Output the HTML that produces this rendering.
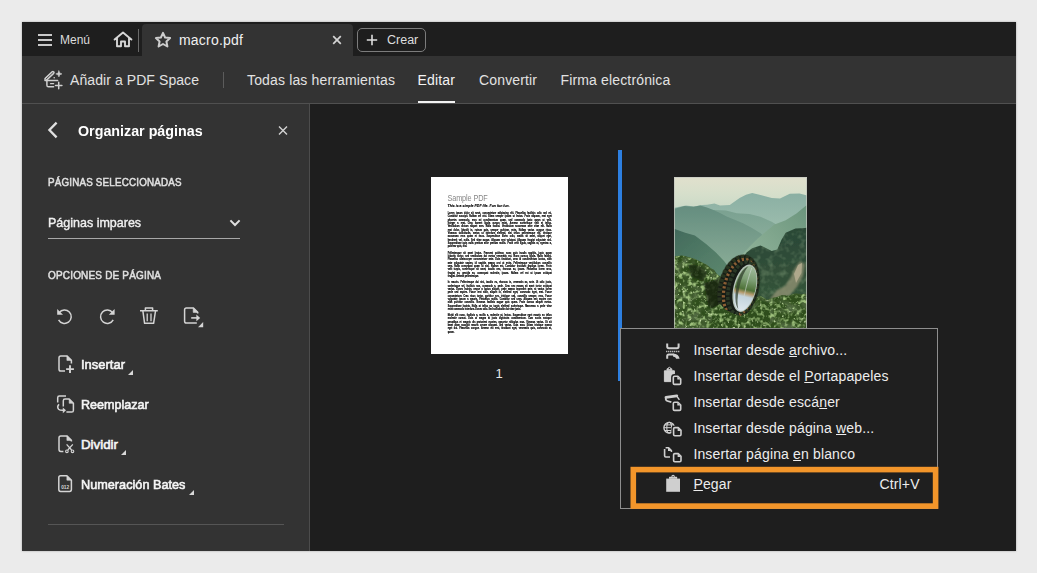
<!DOCTYPE html>
<html lang="es">
<head>
<meta charset="utf-8">
<title>Organizar páginas</title>
<style>
*{box-sizing:border-box;margin:0;padding:0}
html,body{width:1037px;height:573px;overflow:hidden;background:#ebebeb}
body{font-family:"Liberation Sans",sans-serif;color:#e4e4e4;position:relative}
#app{position:absolute;left:22px;top:22px;width:994px;height:529px;background:#1e1e1e;box-shadow:0 0 2px rgba(0,0,0,.3)}
#stage{position:absolute;left:0;top:0;width:1037px;height:573px;overflow:hidden}
.b{position:absolute}
.t{position:absolute;white-space:nowrap;line-height:1;transform-origin:0 50%}
svg{position:absolute;overflow:visible}
/* regions */
#tabbar{left:22px;top:22px;width:994px;height:34px;background:#1e1e1e}
#tab{left:142px;top:24px;width:211px;height:32px;background:#333;border-radius:4px 4px 0 0}
#toolbar{left:22px;top:56px;width:994px;height:47px;background:#333}
#tbline{left:22px;top:103px;width:994px;height:1px;background:#505050}
#panel{left:22px;top:104px;width:287px;height:447px;background:#333}
#pline{left:309px;top:104px;width:1px;height:447px;background:#4c4c4c}
#main{left:310px;top:104px;width:706px;height:447px;background:#1e1e1e}
.tb{font-size:14px;color:#e2e2e2;letter-spacing:.15px}
.hd{transform:scaleX(.935);font-size:10.5px;color:#e0e0e0;-webkit-text-stroke:.5px #e0e0e0;letter-spacing:.2px}
.it{transform:scaleX(1);font-size:13.3px;color:#f6f6f6;-webkit-text-stroke:.6px #f6f6f6}
.mi{font-size:14px;color:#ededed;letter-spacing:.15px}
u{text-decoration:underline;text-underline-offset:1px}

#pg1in{position:absolute;left:0;top:0;width:548px;height:706px;transform:scale(.25);transform-origin:0 0;color:#000}
#pg_t{position:absolute;left:66px;top:68px;font-size:34px;line-height:1;color:#868686;white-space:nowrap;transform:scaleX(.855);transform-origin:0 0;letter-spacing:-.5px}
#pg_s{position:absolute;left:66px;top:106.5px;font-size:14px;line-height:1;font-weight:bold;font-style:italic;white-space:nowrap;color:#000;-webkit-text-stroke:.5px #000}
#pg_b{position:absolute;left:66.5px;top:138px;width:489px;font-size:10.4px;font-weight:bold;line-height:13.33px;color:#000;-webkit-text-stroke:.6px #000;transform:scaleX(.85);transform-origin:0 0}
#pg_b p{margin:0 0 11.6px 0}
#pg_b span{display:block;white-space:nowrap;text-align:justify;text-align-last:justify}
#pg_b span.l{text-align-last:left}
</style>
</head>
<body>
<div id="app"></div>
<div id="stage">
  <!-- tab bar -->
  <div class="b" id="tabbar"></div>
  <div class="b" id="tab"></div>

  <!-- hamburger -->
  <div class="b" style="left:38px;top:34px;width:14px;height:2px;background:#c9c9c9"></div>
  <div class="b" style="left:38px;top:39px;width:14px;height:2px;background:#c9c9c9"></div>
  <div class="b" style="left:38px;top:44px;width:14px;height:2px;background:#c9c9c9"></div>
  <div class="t" style="left:60px;top:34px;font-size:12px;color:#dcdcdc">Menú</div>
  <!-- home -->
  <svg style="left:113px;top:31px" width="20" height="17" viewBox="0 0 20 17"><path d="M1.6 8.6 L10 1.5 L18.4 8.6 M4 7 V15.2 H8 V10.5 H12 V15.2 H16 V7" fill="none" stroke="#d6d6d6" stroke-width="1.9" stroke-linejoin="round" stroke-linecap="round"/></svg>
  <div class="b" style="left:138px;top:29px;width:1px;height:23px;background:#6a6a6a"></div>
  <!-- star -->
  <svg style="left:154px;top:31px" width="18" height="18" viewBox="0 0 18 18"><path d="M9 1.9 L11.1 6.5 L16.1 7.1 L12.4 10.5 L13.4 15.5 L9 13 L4.6 15.5 L5.6 10.5 L1.9 7.1 L6.9 6.5 Z" fill="none" stroke="#cdcdcd" stroke-width="2" stroke-linejoin="round"/></svg>
  <div class="t" style="left:179px;top:33.2px;font-size:14px;letter-spacing:.2px;color:#f0f0f0">macro.pdf</div>
  <!-- tab close -->
  <svg style="left:332px;top:35px" width="10" height="10" viewBox="0 0 10 10"><path d="M1.2 1.2 L8.8 8.8 M8.8 1.2 L1.2 8.8" stroke="#d4d4d4" stroke-width="1.7" fill="none"/></svg>
  <!-- crear -->
  <div class="b" style="left:357px;top:28px;width:69px;height:24px;border:1px solid #7c7c7c;border-radius:5px"></div>
  <svg style="left:366px;top:34px" width="12" height="12" viewBox="0 0 12 12"><path d="M6 0.8 V11.2 M0.8 6 H11.2" stroke="#dedede" stroke-width="1.6" fill="none"/></svg>
  <div class="t" style="left:387px;top:33.5px;font-size:12.5px;color:#dedede">Crear</div>

  <!-- tool bar -->
  <div class="b" id="toolbar"></div>
  <div class="b" id="tbline"></div>

  <!-- pdf space icon -->
  <svg style="left:43px;top:70px" width="20" height="20" viewBox="0 0 20 20" fill="none" stroke="#d0d0d0" stroke-width="1.5" stroke-linecap="round" stroke-linejoin="round">
    <path d="M3 9.1 L9.9 2.6" stroke-width="3.6"/>
    <path d="M3 9.1 L9.9 2.6" stroke="#333" stroke-width="0.9"/>
    <path d="M2 10.5 H14.6"/>
    <path d="M3.9 10.6 V15.2 Q3.9 16.8 5.5 16.8 H10.6"/>
    <path d="M7.6 13.7 H10.6" stroke-width="1.3"/>
    <circle cx="11.2" cy="7.7" r="0.8" fill="#d0d0d0" stroke="none"/>
    <path d="M15.9 0.8 L16.8 3 L19 3.9 L16.8 4.8 L15.9 7 L15 4.8 L12.8 3.9 L15 3 Z" fill="#d0d0d0" stroke-width="0.5"/>
    <path d="M15.7 12.3 V18.7 M12.5 15.5 H18.9" stroke-width="1.5"/>
  </svg>
  <div class="t tb" style="left:70px;top:73px;letter-spacing:.08px">Añadir a PDF Space</div>
  <div class="b" style="left:223px;top:72px;width:1px;height:16px;background:#5c5c5c"></div>
  <div class="t tb" style="left:247px;top:73px">Todas las herramientas</div>
  <div class="t tb" style="left:417.5px;top:73px;color:#f4f4f4">Editar</div>
  <div class="b" style="left:418px;top:101px;width:37px;height:2px;background:#f2f2f2"></div>
  <div class="t tb" style="left:479px;top:73px">Convertir</div>
  <div class="t tb" style="left:560.5px;top:73px">Firma electrónica</div>

  <!-- panel -->
  <div class="b" id="panel"></div>
  <div class="b" id="pline"></div>

  <!-- back chevron -->
  <svg style="left:47px;top:121px" width="12" height="18" viewBox="0 0 12 18"><path d="M9.6 1.6 L2.4 9 L9.6 16.4" fill="none" stroke="#e0e0e0" stroke-width="2.3" stroke-linejoin="miter"/></svg>
  <div class="t" id="p_title" style="transform:scaleX(.985);left:78px;top:123.7px;font-size:14.5px;font-weight:bold;color:#fff">Organizar páginas</div>
  <svg style="left:278px;top:126px" width="10" height="9" viewBox="0 0 10 9"><path d="M1 0.6 L9 8.4 M9 0.6 L1 8.4" stroke="#d4d4d4" stroke-width="1.4" fill="none"/></svg>
  <div class="t hd" id="p_h1" style="left:48px;top:177px">PÁGINAS SELECCIONADAS</div>
  <div class="t" id="p_sel" style="transform:scaleX(.94);left:48px;top:215.5px;font-size:13.3px;color:#f0f0f0;-webkit-text-stroke:.4px #f0f0f0">Páginas impares</div>
  <svg style="left:229px;top:219px" width="12" height="8" viewBox="0 0 12 8"><path d="M1.4 1.4 L6 6 L10.6 1.4" fill="none" stroke="#e0e0e0" stroke-width="2"/></svg>
  <div class="b" style="left:48px;top:238px;width:192px;height:1px;background:#a8a8a8"></div>
  <div class="t hd" id="p_h2" style="transform:scaleX(.95);left:48px;top:270px">OPCIONES DE PÁGINA</div>

  <!-- panel icons (page coords) -->
  <svg style="left:0;top:0" width="1037" height="573" viewBox="0 0 1037 573" fill="none" stroke="#d4d4d4" stroke-width="1.5" stroke-linecap="butt" stroke-linejoin="round">
    <!-- undo -->
    <path d="M59.2 312.6 A6.7 6.7 0 1 1 58.6 319.8"/>
    <path d="M57.2 309 V314.8 H63 Z" fill="#d4d4d4" stroke="none"/>
    <!-- redo -->
    <path d="M112.6 312.6 A6.7 6.7 0 1 0 113.2 319.8"/>
    <path d="M114.6 309 V314.8 H108.8 Z" fill="#d4d4d4" stroke="none"/>
    <!-- trash -->
    <path d="M140 310.8 H157.8 M145.4 310.6 V308 H152.6 V310.6"/>
    <path d="M142.9 311 L144.6 323.3 H153.6 L155.5 311"/>
    <path d="M147.2 313.6 V321.2 M151 313.6 V321.2" stroke-width="1.3"/>
    <!-- export -->
    <path d="M197.7 313.6 V312.4 L193.2 307.9 H186.4 Q184.6 307.9 184.6 309.7 V321.2 Q184.6 323 186.4 323 H196.8"/>
    <path d="M193.2 307.9 V312.4 H197.7 Z" fill="#d4d4d4" stroke-width="0.6"/>
    <path d="M191.2 317.9 H197" stroke-width="1.6"/>
    <path d="M196.4 314.6 L200.2 317.9 L196.4 321.2 Z" fill="#d4d4d4" stroke="none"/>
    <path d="M203.2 322 V327.2 H198 Z" fill="#d4d4d4" stroke="none"/>
    <!-- insert -->
    <path d="M71.4 363.6 V360.4 L66.9 355.9 H60.8 Q59 355.9 59 357.7 V369.3 Q59 371.1 60.8 371.1 H65"/>
    <path d="M66.9 355.9 V360.4 H71.4 Z" fill="#d4d4d4" stroke-width="0.6"/>
    <path d="M70 365.3 V373 M66.1 369.1 H73.9" stroke-width="1.9"/>
    <!-- replace -->
    <path d="M66 396 H59.4 Q57.7 396 57.7 397.7 V402.6"/>
    <path d="M63.3 406.4 V400.8 Q63.3 399.1 65 399.1 H69.2 L73.4 403.3 V410.4 Q73.4 412.1 71.7 412.1 H66.4"/>
    <path d="M69.2 399.1 V403.3 H73.4 Z" fill="#d4d4d4" stroke-width="0.6"/>
    <path d="M59 404.3 Q56.6 407 58.6 409.2 Q60 410.5 63.4 410.3"/>
    <path d="M62.8 407.4 L66 410.3 L62.8 413.2 Z" fill="#d4d4d4" stroke="none"/>
    <!-- split -->
    <path d="M71.4 441.4 V440.4 L66.9 435.9 H60.8 Q59 435.9 59 437.7 V449.6 Q59 451.4 60.8 451.4 H63.4"/>
    <path d="M66.9 435.9 V440.4 H71.4 Z" fill="#d4d4d4" stroke-width="0.6"/>
    <path d="M66.6 444.4 L71.6 450 M72.8 444.4 L67.8 450" stroke-width="1.3"/>
    <circle cx="66.9" cy="451.3" r="1.3" stroke-width="1.1"/>
    <circle cx="72.5" cy="451.3" r="1.3" stroke-width="1.1"/>
    <!-- bates -->
    <path d="M66.9 475.7 H60.6 Q58.8 475.7 58.8 477.5 V489.6 Q58.8 491.4 60.6 491.4 H69.6 Q71.4 491.4 71.4 489.6 V480.2 Z"/>
    <path d="M66.9 475.7 V480.2 H71.4 Z" fill="#d4d4d4" stroke-width="0.6"/>
    <text x="65.2" y="489.2" font-family="Liberation Sans, sans-serif" font-size="4.8" font-weight="bold" fill="#d4d4d4" stroke="none" text-anchor="middle">012</text>
  </svg>

  <div class="t it" id="p_i1" style="transform:scaleX(0.975);left:81px;top:357.5px">Insertar</div>
  <div class="t it" id="p_i2" style="transform:scaleX(0.945);left:81px;top:397.5px">Reemplazar</div>
  <div class="t it" id="p_i3" style="transform:scaleX(1.0);left:81px;top:437.5px">Dividir</div>
  <div class="t it" id="p_i4" style="transform:scaleX(0.955);left:81px;top:477.5px">Numeración Bates</div>
  <svg style="left:128px;top:370px" width="5" height="5" viewBox="0 0 5 5"><path d="M5 0 V5 H0 Z" fill="#d8d8d8"/></svg>
  <svg style="left:121px;top:450px" width="5" height="5" viewBox="0 0 5 5"><path d="M5 0 V5 H0 Z" fill="#d8d8d8"/></svg>
  <svg style="left:189px;top:490px" width="5" height="5" viewBox="0 0 5 5"><path d="M5 0 V5 H0 Z" fill="#d8d8d8"/></svg>
  <div class="b" style="left:48px;top:524px;width:236px;height:1px;background:#555"></div>

  <!-- main -->
  <div class="b" id="main"></div>

  <!-- thumbnail 1 -->
  <div class="b" id="pg1" style="left:431px;top:177px;width:137px;height:176.5px;background:#fff;overflow:hidden">
    <div id="pg1in">
      <div id="pg_t">Sample PDF</div>
      <div id="pg_s">This is a simple PDF file. Fun fun fun.</div>
      <div id="pg_b">
      <p><span>Lorem ipsum dolor sit amet, consectetuer adipiscing elit. Phasellus facilisis odio sed mi.</span><span>Curabitur suscipit. Nullam vel nisi. Etiam semper ipsum ut lectus. Proin aliquam, erat eget</span><span>pharetra commodo, eros mi condimentum quam, sed commodo justo quam ut velit.</span><span>Integer a erat. Cras laoreet ligula cursus enim. Aenean scelerisque velit et tellus.</span><span>Vestibulum dictum aliquet sem. Nulla facilisi. Vestibulum accumsan ante vitae elit. Nulla</span><span>erat dolor, blandit in, rutrum quis, semper pulvinar, enim. Nullam varius congue risus.</span><span>Vivamus sollicitudin, metus ut interdum eleifend, nisi tellus pellentesque elit, tristique</span><span>accumsan eros quam et risus. Suspendisse libero odio, mattis sit amet, aliquet eget,</span><span>hendrerit vel, nulla. Sed vitae augue. Aliquam erat volutpat. Aliquam feugiat vulputate nisl.</span><span>Suspendisse quis nulla pretium ante pretium mollis. Proin velit ligula, sagittis at, egestas a,</span><span class="l">pulvinar quis, nisl.</span></p>
      <p><span>Pellentesque sit amet lectus. Praesent pulvinar, nunc quis iaculis sagittis, justo quam</span><span>lobortis tortor, sed vestibulum dui metus venenatis est. Nunc cursus ligula. Nulla facilisi.</span><span>Phasellus ullamcorper consectetuer ante. Duis tincidunt, urna id condimentum luctus, nibh</span><span>ante vulputate sapien, id sagittis massa orci ut enim. Pellentesque vestibulum convallis</span><span>sem. Nulla consequat quam ut nisl. Nullam est. Curabitur tincidunt dapibus lorem. Proin</span><span>velit turpis, scelerisque sit amet, iaculis nec, rhoncus ac, ipsum. Phasellus lorem arcu,</span><span>feugiat eu, gravida eu, consequat molestie, ipsum. Nullam vel est ut ipsum volutpat</span><span class="l">feugiat. Aenean pellentesque.</span></p>
      <p><span>In mauris. Pellentesque dui nisi, iaculis eu, rhoncus in, venenatis ac, ante. Ut odio justo,</span><span>scelerisque vel, facilisis non, commodo a, pede. Cras nec massa sit amet tortor volutpat</span><span>varius. Donec lacinia, neque a luctus aliquet, pede massa imperdiet ante, at varius lorem</span><span>pede sed sapien. Fusce erat nibh, aliquet in, eleifend eget, commodo eget, erat. Fusce</span><span>consectetuer. Cras risus tortor, porttitor nec, tristique sed, convallis semper, eros. Fusce</span><span>vulputate ipsum a mauris. Phasellus mollis. Curabitur sed urna. Aliquam nec sapien non</span><span>nibh pulvinar convallis. Vivamus facilisis augue quis quam. Proin cursus aliquet metus.</span><span>Suspendisse lacinia. Nulla at tellus ac turpis eleifend scelerisque. Maecenas a pede vitae</span><span class="l">enim commodo interdum. Donec odio. Sed sollicitudin dui vitae justo.</span></p>
      <p><span>Morbi elit nunc, facilisis a, mollis a, molestie at, lectus. Suspendisse eget mauris eu tellus</span><span>molestie cursus. Duis ut magna at justo dignissim condimentum. Cum sociis natoque</span><span>penatibus et magnis dis parturient montes, nascetur ridiculus mus. Vivamus varius. Ut sit</span><span>amet diam suscipit mauris ornare aliquam. Sed varius. Duis arcu. Etiam tristique massa</span><span>eget dui. Phasellus congue. Aenean est erat, tincidunt eget, venenatis quis, commodo at,</span><span class="l">quam.</span></p>
      </div>
    </div>
  </div>
  <div class="t" style="left:495.4px;top:367px;font-size:13px;color:#e8e8e8">1</div>
  <!-- blue insert bar -->
  <div class="b" style="left:618px;top:150px;width:3.5px;height:231px;background:#2d7fe0"></div>
  <!-- thumbnail 2 -->
  <!-- PHOTO-START -->
  <svg id="photo" style="left:674px;top:177px" width="133" height="177" viewBox="0 0 133 177">
    <defs>
      <linearGradient id="gsky" gradientUnits="userSpaceOnUse" x1="0" y1="0" x2="0" y2="34"><stop offset="0" stop-color="#e1e0cd"/><stop offset=".5" stop-color="#d6dfcb"/><stop offset="1" stop-color="#c8d8c6"/></linearGradient>
      <linearGradient id="gfar" x1="0" y1="0" x2="0" y2="1"><stop offset="0" stop-color="#8aafa3"/><stop offset="1" stop-color="#abc8b5"/></linearGradient>
      <linearGradient id="gmidl" x1="0" y1="0" x2="0" y2="1"><stop offset="0" stop-color="#648d7f"/><stop offset="1" stop-color="#8cae98"/></linearGradient>
      <linearGradient id="gmidb" x1="0" y1="0" x2="0" y2="1"><stop offset="0" stop-color="#7aa191"/><stop offset="1" stop-color="#99b9a4"/></linearGradient>
      <linearGradient id="gright" x1="1" y1="0" x2="0" y2="1"><stop offset="0" stop-color="#6a947c"/><stop offset="1" stop-color="#9abba1"/></linearGradient>
      <linearGradient id="glow" x1="0" y1="0" x2="1" y2="1"><stop offset="0" stop-color="#41695b"/><stop offset="1" stop-color="#5f8a70"/></linearGradient>
      <linearGradient id="gdark" x1="0" y1="0" x2="0" y2="1"><stop offset="0" stop-color="#2a4736"/><stop offset="1" stop-color="#35543a"/></linearGradient>
      <linearGradient id="grim" x1="0" y1="0" x2="0" y2="1"><stop offset="0" stop-color="#a3bd9f"/><stop offset=".3" stop-color="#7d9e74"/><stop offset=".52" stop-color="#4e7238"/><stop offset=".6" stop-color="#b59a6c"/><stop offset=".68" stop-color="#c3d3dd"/><stop offset="1" stop-color="#dfe8ee"/></linearGradient>
      <filter id="b1" x="-10%" y="-10%" width="120%" height="120%"><feGaussianBlur stdDeviation="0.7"/></filter>
      <filter id="b2" x="-10%" y="-10%" width="120%" height="120%"><feGaussianBlur stdDeviation="1.3"/></filter>
      <filter id="b3" x="-20%" y="-20%" width="140%" height="140%"><feGaussianBlur stdDeviation="0.45"/></filter>
      <filter id="clump" x="0" y="0" width="100%" height="100%">
        <feTurbulence type="fractalNoise" baseFrequency="0.11" numOctaves="2" seed="4" result="n"/>
        <feColorMatrix in="n" type="matrix" values="0 0 0 0 0.08  0 0 0 0 0.14  0 0 0 0 0.05  0 0 2.8 0 -1.05" result="c"/>
        <feComposite in="c" in2="SourceGraphic" operator="in"/>
      </filter>
      <filter id="leaf" x="0" y="0" width="100%" height="100%">
        <feTurbulence type="fractalNoise" baseFrequency="0.22" numOctaves="2" seed="7" result="n"/>
        <feColorMatrix in="n" type="matrix" values="0 0 0 0 0.34  0 0 0 0 0.53  0 0 0 0 0.2  3.4 2.0 0 0 -2.65" result="c"/>
        <feComposite in="c" in2="SourceGraphic" operator="in"/>
      </filter>
      <filter id="leaf2" x="0" y="0" width="100%" height="100%">
        <feTurbulence type="fractalNoise" baseFrequency="0.36" numOctaves="2" seed="23" result="n"/>
        <feColorMatrix in="n" type="matrix" values="0 0 0 0 0.58  0 0 0 0 0.74  0 0 0 0 0.4  0 3.6 1.8 0 -3.25" result="c"/>
        <feComposite in="c" in2="SourceGraphic" operator="in"/>
      </filter>
      <filter id="ftex" x="0" y="0" width="100%" height="100%">
        <feTurbulence type="fractalNoise" baseFrequency="0.16" numOctaves="2" seed="11" result="n"/>
        <feColorMatrix in="n" type="matrix" values="0 0 0 0 0.36  0 0 0 0 0.52  0 0 0 0 0.3  0 2.6 0 0 -1.2" result="c"/>
        <feComposite in="c" in2="SourceGraphic" operator="in"/>
      </filter>
      <clipPath id="pc"><rect x="0" y="0" width="133" height="177"/></clipPath>
    </defs>
    <g clip-path="url(#pc)">
      <rect width="133" height="177" fill="url(#gsky)"/>
      <!-- far ridge -->
      <path filter="url(#b1)" d="M-2 32 L1.4 30.5 L12 28.6 L20 29.6 L28 28 L33 27.8 L40.5 26.5 L46 28.6 L55.8 27.9 L65.6 20.9 L72 17.8 L78.2 16 L86.5 18.1 L97.7 20.9 L106 21.6 L115.8 16.7 L125.6 16.5 L131.2 18.1 L135 19 V80 H-2 Z" fill="url(#gfar)"/>
      <!-- middle back ridge -->
      <path filter="url(#b1)" d="M40 33 L52 33.5 L62.8 36.3 L75.4 37 L86.5 39.8 L97.7 44.7 L110 52 V90 H40 Z" fill="url(#gmidb)"/>
      <!-- left mid mountain -->
      <path filter="url(#b1)" d="M-2 32 L1.4 31.4 L10.5 29 L19.5 29.8 L26.3 28.4 L33 30.5 L39.5 33 L46 36 L52.7 39.5 L60 42.6 L68.5 46 L78 51 L87 56.6 L92 62 L80 95 H-2 Z" fill="url(#gmidl)"/>
      <!-- right mid slope -->
      <path filter="url(#b1)" d="M135 27 L131.2 29.3 L122.8 36.3 L111.7 43.3 L100.5 47.5 L92 54.4 L83.7 61.4 L75.4 69.8 L66 80 L60 100 H135 Z" fill="url(#gright)"/>
      <!-- left lower mountain -->
      <path filter="url(#b1)" d="M-2 51 L1.4 52.3 L11.2 55.8 L20.9 58.6 L32.1 67 L41.9 75.4 L50 84 L62 100 H-2 Z" fill="url(#glow)"/>
      <!-- dark forest right -->
      <path filter="url(#b1)" d="M135 50 L131.2 51 L121.4 51.6 L111.7 55.8 L107.5 62.8 L103.3 72.6 L97.7 74 L89.3 69.8 L86.5 68.4 L78.2 71.2 L72.6 75.4 L68 82 L66 125 H135 Z" fill="url(#gdark)"/>
      <path d="M135 50 L131.2 51 L121.4 51.6 L111.7 55.8 L107.5 62.8 L103.3 72.6 L97.7 74 L89.3 69.8 L86.5 68.4 L78.2 71.2 L72.6 75.4 L68 82 L66 125 H135 Z" fill="#000" filter="url(#ftex)" opacity=".3"/>
      <!-- rocks -->
      <path filter="url(#b2)" d="M96 122 L103 113 L111 109 L117 100 L121 91 L126 84 L131 87 L129 99 L123 110 L116 118 L104 124 Z" fill="#8f9072" opacity=".8"/>
      <path filter="url(#b1)" d="M120 97 L124 88 L128 86 L127.5 96 L122 106 Z" fill="#b7ae92" opacity=".85"/>
      <!-- bushes -->
      <path d="M-2 79 L1.4 79.3 L8 78.5 L14.3 80 L21 82 L28.6 85.7 L33 88 L37.2 91.5 L40 93 L43 97.2 L47 100 L52 108 L60 116 L70 120 L80 121 L85.9 118.7 L90 121 L93 123 L98 121 L103 120 L108 118 L114.5 118.7 L121 116.5 L128.8 117.2 L135 116 V180 H-2 Z" fill="#2f4e1c"/>
      <path d="M-2 79 L1.4 79.3 L8 78.5 L14.3 80 L21 82 L28.6 85.7 L33 88 L37.2 91.5 L40 93 L43 97.2 L47 100 L52 108 L60 116 L70 120 L80 121 L85.9 118.7 L90 121 L93 123 L98 121 L103 120 L108 118 L114.5 118.7 L121 116.5 L128.8 117.2 L135 116 V180 H-2 Z" fill="#000" filter="url(#clump)"/>
      <path d="M-2 79 L1.4 79.3 L8 78.5 L14.3 80 L21 82 L28.6 85.7 L33 88 L37.2 91.5 L40 93 L43 97.2 L47 100 L52 108 L60 116 L70 120 L80 121 L85.9 118.7 L90 121 L93 123 L98 121 L103 120 L108 118 L114.5 118.7 L121 116.5 L128.8 117.2 L135 116 V180 H-2 Z" fill="#000" filter="url(#leaf)"/>
      <path d="M-2 79 L1.4 79.3 L8 78.5 L14.3 80 L21 82 L28.6 85.7 L33 88 L37.2 91.5 L40 93 L43 97.2 L47 100 L52 108 L60 116 L70 120 L80 121 L85.9 118.7 L90 121 L93 123 L98 121 L103 120 L108 118 L114.5 118.7 L121 116.5 L128.8 117.2 L135 116 V180 H-2 Z" fill="#000" filter="url(#leaf2)"/>
      <!-- dark shadows in bush left of tire -->
      <path filter="url(#b2)" d="M14 87 L26 89 L33 96 L29 104 L18 100 Z" fill="#18260f" opacity=".8"/>
      <path filter="url(#b2)" d="M30 106 L44 102 L50 122 L46 140 L34 128 Z" fill="#16230e" opacity=".85"/>
      <!-- tire -->
      <g transform="rotate(13.5 64.5 110.6)">
        <ellipse cx="64.5" cy="110.6" rx="20.2" ry="33.6" fill="#191e15" filter="url(#b3)"/>
        <ellipse cx="64.2" cy="110.6" rx="17.8" ry="31.3" fill="none" stroke="#28341f" stroke-width="4.2" stroke-dasharray="3.2 1.5"/>
        <ellipse cx="65.6" cy="110.4" rx="15.2" ry="28.8" fill="none" stroke="#8a5e34" stroke-width="3.2" stroke-dasharray="2.3 2.1"/>
        <ellipse cx="67.8" cy="110" rx="13" ry="26.4" fill="none" stroke="#2a3826" stroke-width="3.6" stroke-dasharray="3.2 1.6"/>
        <ellipse cx="70.8" cy="109.7" rx="11.4" ry="24.2" fill="#b7c4ba"/>
        <ellipse cx="71.1" cy="109.7" rx="10.3" ry="23.1" fill="url(#grim)"/>
        <path d="M62 104 Q63 92 69 87.6 Q65 96 65.2 110 Q65.4 124 69.4 131.8 Q62.4 126 62 104 Z" fill="#2c3a28" opacity=".7"/>
        <path d="M72.8 88.4 Q71.4 100 72 118" fill="none" stroke="#cfd9d2" stroke-width=".7" opacity=".8"/>
      </g>
      <!-- leaves in front of tire bottom -->
      <path d="M38 131 L46 127 L52 133 L58 136 L66 139 L74 136 L82 130 L88 124 L96 126 V152 H38 Z" fill="#2f4e1c" filter="url(#b3)"/>
      <path d="M38 131 L46 127 L52 133 L58 136 L66 139 L74 136 L82 130 L88 124 L96 126 V152 H38 Z" fill="#000" filter="url(#leaf)"/>
      <path d="M38 131 L46 127 L52 133 L58 136 L66 139 L74 136 L82 130 L88 124 L96 126 V152 H38 Z" fill="#000" filter="url(#leaf2)"/>
    </g>
    <rect x=".5" y=".5" width="132" height="176" fill="none" stroke="#c6cac2" stroke-width="1" opacity=".75"/>
  </svg>
  <!-- PHOTO-END -->


  <!-- context menu -->
  <div class="b" id="menu" style="left:620px;top:328px;width:318px;height:181px;background:#1f1f1f;border:1px solid #8e8e8e"></div>
  <svg style="left:0;top:0" width="1037" height="573" viewBox="0 0 1037 573" fill="none" stroke="#cfcfcf" stroke-width="1.6" stroke-linejoin="round">
    <!-- insert from file -->
    <path d="M667.2 343.4 V346.6 Q667.2 348.2 668.8 348.2 H677 Q678.6 348.2 678.6 346.6 V343.4" stroke-width="2"/>
    <path d="M666.2 351.4 H679.6" stroke-width="1.5" stroke-dasharray="1.1 0.9" stroke="#dcdcdc"/>
    <path d="M667.2 358.8 V356 Q667.2 354.4 668.8 354.4 H673.6" stroke-width="2"/>
    <path d="M673 353.4 Q679 353.8 679.6 358.8 H676.2 Q675.8 356.8 673 356.6 Z" fill="#cfcfcf" stroke="none"/>
    <!-- insert from clipboard -->
    <path d="M664.4 370.8 H674.4 V381.6 H664.4 Z M667 370.4 V368.8 H671.8 V370.4" fill="#cfcfcf" stroke-width="1"/>
    <circle cx="669.4" cy="368.4" r="1.1" fill="#1f1f1f" stroke="#cfcfcf" stroke-width="1"/>
    <path d="M674.5 376.2 H677.9 L680.7 379.0 V383.2 Q680.7 384.4 679.5 384.4 H674.5 Q673.3 384.4 673.3 383.2 V377.4 Q673.3 376.2 674.5 376.2 Z" fill="#1f1f1f" stroke="#1f1f1f" stroke-width="4.4"/><path d="M674.5 376.2 H677.9 L680.7 379.0 V383.2 Q680.7 384.4 679.5 384.4 H674.5 Q673.3 384.4 673.3 383.2 V377.4 Q673.3 376.2 674.5 376.2 Z" fill="#1f1f1f" stroke="#cfcfcf" stroke-width="1.6"/><path d="M677.3 376.4 V379.6 H680.5 Z" fill="#cfcfcf" stroke="none"/>
    <!-- insert from scanner -->
    <path d="M666 397.4 L676.8 395.8" stroke-width="2.8" stroke-linecap="round"/>
    <path d="M665.8 398 Q665.4 400.4 667.4 401 L672.2 402.4" stroke-width="1.8" stroke-linecap="round"/>
    <path d="M677 396.4 L679.4 399.8" stroke-width="1.4"/>
    <path d="M674.5 402.2 H677.9 L680.7 405.0 V409.2 Q680.7 410.4 679.5 410.4 H674.5 Q673.3 410.4 673.3 409.2 V403.4 Q673.3 402.2 674.5 402.2 Z" fill="#1f1f1f" stroke="#1f1f1f" stroke-width="4.4"/><path d="M674.5 402.2 H677.9 L680.7 405.0 V409.2 Q680.7 410.4 679.5 410.4 H674.5 Q673.3 410.4 673.3 409.2 V403.4 Q673.3 402.2 674.5 402.2 Z" fill="#1f1f1f" stroke="#cfcfcf" stroke-width="1.6"/><path d="M677.3 402.4 V405.6 H680.5 Z" fill="#cfcfcf" stroke="none"/>
    <!-- insert from web -->
    <circle cx="669.2" cy="427.7" r="5.3" stroke-width="1.4"/>
    <ellipse cx="669.2" cy="427.7" rx="2.4" ry="5.3" stroke-width="1.1"/>
    <path d="M664 427.7 H674.4 M665 424.9 H673.4 M665 430.5 H673.4" stroke-width="1"/>
    <path d="M674.8 427.6 H678.2 L681.0 430.4 V434.6 Q681.0 435.8 679.8 435.8 H674.8 Q673.6 435.8 673.6 434.6 V428.8 Q673.6 427.6 674.8 427.6 Z" fill="#1f1f1f" stroke="#1f1f1f" stroke-width="4.4"/><path d="M674.8 427.6 H678.2 L681.0 430.4 V434.6 Q681.0 435.8 679.8 435.8 H674.8 Q673.6 435.8 673.6 434.6 V428.8 Q673.6 427.6 674.8 427.6 Z" fill="#1f1f1f" stroke="#cfcfcf" stroke-width="1.6"/><path d="M677.6 427.8 V431.0 H680.8 Z" fill="#cfcfcf" stroke="none"/>
    <!-- insert blank page -->
    <path d="M665.6 447.8 H668.6 L671.4 450.6 V452 M664.6 449 V455.8 Q664.6 457 665.8 457 H670" stroke-width="1.6"/>
    <path d="M668 447.6 V451 H671.4 Z" fill="#cfcfcf" stroke="none"/>
    <path d="M674.8 453.6 H678.2 L681.0 456.4 V460.6 Q681.0 461.8 679.8 461.8 H674.8 Q673.6 461.8 673.6 460.6 V454.8 Q673.6 453.6 674.8 453.6 Z" fill="#1f1f1f" stroke="#1f1f1f" stroke-width="4.4"/><path d="M674.8 453.6 H678.2 L681.0 456.4 V460.6 Q681.0 461.8 679.8 461.8 H674.8 Q673.6 461.8 673.6 460.6 V454.8 Q673.6 453.6 674.8 453.6 Z" fill="#1f1f1f" stroke="#cfcfcf" stroke-width="1.6"/><path d="M677.6 453.8 V457.0 H680.8 Z" fill="#cfcfcf" stroke="none"/>
    <!-- paste clipboard -->
    <path d="M666.2 478.6 H680 V491.8 H666.2 Z" fill="#cfcfcf" stroke="none"/>
    <path d="M669.6 478.8 V477.4 H676.6 V478.8" fill="#cfcfcf" stroke-width="1.2"/>
    <circle cx="673.1" cy="476.6" r="1.2" fill="#1f1f1f" stroke="#cfcfcf" stroke-width="1.1"/>
  </svg>
  <div class="t mi" id="m1" style="left:693.4px;top:343.4px">Insertar desde <u>a</u>rchivo...</div>
  <div class="t mi" id="m2" style="left:693.4px;top:369.4px">Insertar desde el <u>P</u>ortapapeles</div>
  <div class="t mi" id="m3" style="left:693.4px;top:395.4px">Insertar desde escá<u>n</u>er</div>
  <div class="t mi" id="m4" style="left:693.4px;top:421.4px">Insertar desde página <u>w</u>eb...</div>
  <div class="t mi" id="m5" style="left:693.4px;top:447.4px">Insertar página <u>e</u>n blanco</div>
  <div class="t mi" id="m6" style="left:693.4px;top:477.4px"><u>P</u>egar</div>
  <div class="t mi" id="m7" style="left:879.5px;top:477.4px">Ctrl+V</div>
  <!-- orange highlight -->
  <svg style="left:0;top:0" width="1037" height="573" viewBox="0 0 1037 573"><rect x="633.3" y="469.6" width="302.3" height="36.5" fill="none" stroke="#f2952a" stroke-width="5.6"/></svg>

</div>
</body>
</html>
